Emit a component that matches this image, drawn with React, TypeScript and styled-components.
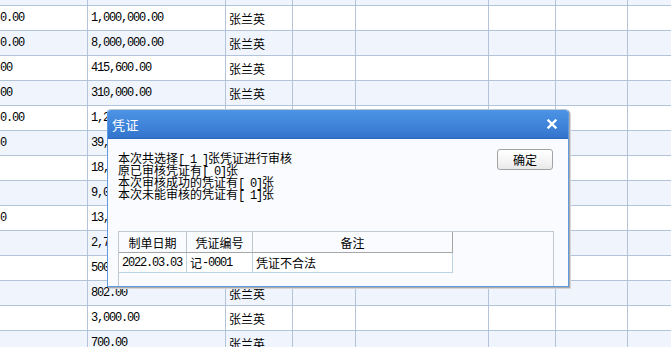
import styled, { createGlobalStyle } from "styled-components";

const GlobalStyle = createGlobalStyle`
  html, body {
    margin: 0;
    padding: 0;
    background: #ffffff;
    overflow: hidden;
  }
  body {
    font-family: "Noto Sans CJK SC", "DejaVu Sans", sans-serif;
    font-size: 12px;
    color: #000;
  }
`;

//style

const Page = styled.div`
  position: relative;
  width: 671px;
  height: 347px;
  overflow: hidden;
`;

const Sheet = styled.div`
  display: flex;
  flex-direction: column;
  margin-top: -19px;
`;

const Row = styled.div<{ $alt: boolean }>`
  display: flex;
  height: 24px;
  border-bottom: 1px solid #b3c3d9;
  background: ${(p) => (p.$alt ? "#f0f5fd" : "#ffffff")};
`;

const Cell = styled.div<{ $w: number; $mono?: boolean }>`
  flex: 0 0 ${(p) => p.$w}px;
  box-sizing: border-box;
  border-right: 1px solid #b3c3d9;
  padding-left: 3px;
  display: flex;
  align-items: center;
  white-space: nowrap;
  overflow: hidden;
  font-family: ${(p) =>
    p.$mono ? `"Liberation Mono", monospace` : `"Noto Sans CJK SC", sans-serif`};
  font-size: 12px;
  letter-spacing: ${(p) => (p.$mono ? "-1.2px" : "0")};
  &:first-child {
    padding-left: 0;
  }
  &:last-child {
    flex: 1;
    border-right: none;
  }
`;

const Num = styled.span`
  font-family: "Liberation Mono", monospace;
  font-size: 12px;
  letter-spacing: -1.2px;
  line-height: 12px;
  vertical-align: 0;
`;

const Dialog = styled.div`
  position: absolute;
  left: 107px;
  top: 109px;
  width: 460px;
  height: 176px;
  border: 1px solid #5f9be3;
  border-top: 1px solid #b9c6d6;
  border-radius: 4px 4px 0 0;
  box-shadow: 1px 1px 0 #a9a9a9, 2px 2px 0 #d6d6d6;
  background: #f9fbfe;
  display: flex;
  flex-direction: column;
  overflow: hidden;
`;

const TitleBar = styled.div`
  height: 28px;
  flex: 0 0 28px;
  background: linear-gradient(#4c94e6, #3b7fd6 70%, #3373cc);
  border-bottom: 1px solid #2c68bd;
  display: flex;
  align-items: center;
  justify-content: space-between;
  padding: 0 11px 0 4px;
  color: #fff;
`;

const Title = styled.span`
  font-size: 13px;
  letter-spacing: 0.5px;
`;

const Body = styled.div`
  flex: 1;
  display: flex;
  flex-direction: column;
  padding: 0 0 0 10px;
`;

const Top = styled.div`
  display: flex;
  justify-content: space-between;
  align-items: flex-start;
  height: 92px;
`;

const Messages = styled.div`
  padding-top: 13px;
  display: flex;
  flex-direction: column;
`;

const MessageLine = styled.div`
  height: 12px;
  line-height: 12px;
  font-size: 12px;
  white-space: pre;
`;

const OkButton = styled.button`
  margin: 10px 15px 0 0;
  width: 56px;
  height: 21px;
  border: 1px solid #a3a3a3;
  border-radius: 3px;
  background: linear-gradient(#ffffff, #f4f4f4 60%, #e9e9e9);
  font-family: "Noto Sans CJK SC", sans-serif;
  font-size: 12px;
  color: #000;
  padding: 0;
  line-height: 19px;
`;

const Grid = styled.div`
  width: 436px;
  flex: 1;
  border: 1px solid #c3c9d1;
  border-bottom: none;
  box-sizing: border-box;
`;

const GridHead = styled.div`
  display: flex;
  width: 334px;
  height: 20px;
  border-bottom: 1px solid #a6a6a6;
`;

const HeadCell = styled.div<{ $w: number }>`
  flex: 0 0 ${(p) => p.$w}px;
  box-sizing: border-box;
  border-right: 1px solid #bcc4cc;
  display: flex;
  align-items: center;
  justify-content: center;
  font-size: 12px;
  &:last-child {
    border-right: 1px solid #a6a6a6;
  }
`;

const GridRow = styled.div`
  display: flex;
  width: 334px;
  height: 19px;
  background: #fff;
  border-bottom: 1px solid #bcd3e6;
`;

const DataCell = styled.div<{ $w: number; $mono?: boolean }>`
  flex: 0 0 ${(p) => p.$w}px;
  box-sizing: border-box;
  border-right: 1px solid #bcd3e6;
  display: flex;
  align-items: center;
  padding-left: 3px;
  white-space: nowrap;
  font-family: ${(p) =>
    p.$mono ? `"Liberation Mono", monospace` : `"Noto Sans CJK SC", sans-serif`};
  font-size: 12px;
  letter-spacing: ${(p) => (p.$mono ? "-1.2px" : "0")};
`;

//

function CloseIcon() {
  return (
    <svg width="10" height="10" viewBox="0 0 10 10">
      <path d="M1.5 1.5 L8.5 8.5 M8.5 1.5 L1.5 8.5" stroke="#fff" strokeWidth="2.4" strokeLinecap="square" />
    </svg>
  );
}

const widths = [88, 138, 67, 63, 133, 67, 72, 50];

const rows: [string, string, string][] = [
  ["", "", ""],
  ["0.00", "1,000,000.00", "张兰英"],
  ["0.00", "8,000,000.00", "张兰英"],
  ["00", "415,600.00", "张兰英"],
  ["00", "310,000.00", "张兰英"],
  ["0.00", "1,200,000.00", "张兰英"],
  ["0", "39,000.00", "张兰英"],
  ["", "18,000.00", "张兰英"],
  ["", "9,000.00", "张兰英"],
  ["0", "13,000.00", "张兰英"],
  ["", "2,700.00", "张兰英"],
  ["", "500.00", "张兰英"],
  ["", "802.00", "张兰英"],
  ["", "3,000.00", "张兰英"],
  ["", "700.00", "张兰英"],
];

// [前文, 方括号里的数, 后文]
const messages: [string, string, string][] = [
  ["本次共选择", "[ 1 ]", "张凭证进行审核"],
  ["原已审核凭证有", "[ 0]", "张"],
  ["本次审核成功的凭证有", "[ 0]", "张"],
  ["本次未能审核的凭证有", "[ 1]", "张"],
];

function App() {
  return (
    <Page>
      <GlobalStyle />
      <Sheet>
        {rows.map((r, i) => (
          <Row key={i} $alt={i % 2 === 0}>
            <Cell $w={widths[0]} $mono>
              {r[0]}
            </Cell>
            <Cell $w={widths[1]} $mono>
              {r[1]}
            </Cell>
            <Cell $w={widths[2]}>{r[2]}</Cell>
            {widths.slice(3).map((w, j) => (
              <Cell key={j} $w={w} />
            ))}
          </Row>
        ))}
      </Sheet>

      <Dialog>
        <TitleBar>
          <Title>凭证</Title>
          <CloseIcon />
        </TitleBar>
        <Body>
          <Top>
            <Messages>
              {messages.map((m, i) => (
                <MessageLine key={i}>
                  {m[0]}
                  <Num>{m[1]}</Num>
                  {m[2]}
                </MessageLine>
              ))}
            </Messages>
            <OkButton>确定</OkButton>
          </Top>
          <Grid>
            <GridHead>
              <HeadCell $w={68}>制单日期</HeadCell>
              <HeadCell $w={66}>凭证编号</HeadCell>
              <HeadCell $w={200}>备注</HeadCell>
            </GridHead>
            <GridRow>
              <DataCell $w={68} $mono>
                2022.03.03
              </DataCell>
              <DataCell $w={66}>
                记<Num>-0001</Num>
              </DataCell>
              <DataCell $w={200}>凭证不合法</DataCell>
            </GridRow>
          </Grid>
        </Body>
      </Dialog>
    </Page>
  );
}

export default App;
